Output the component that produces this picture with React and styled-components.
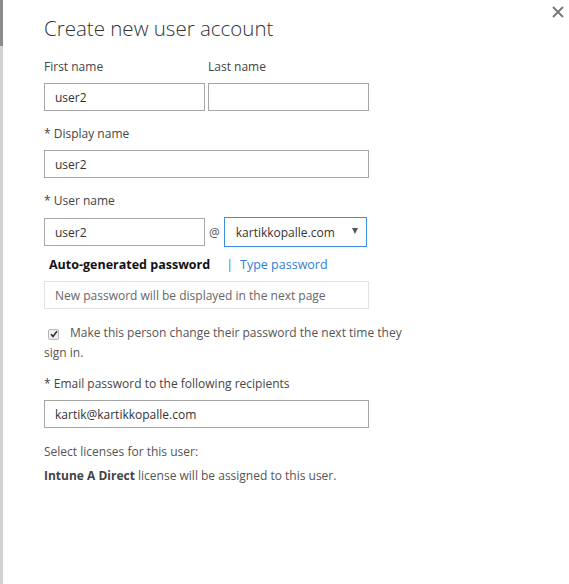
import { createGlobalStyle, styled } from 'styled-components';

const GlobalStyle = createGlobalStyle`
  html, body {
    margin: 0;
    padding: 0;
    background: #fff;
  }
  body {
    font-family: 'Open Sans', 'Liberation Sans', sans-serif;
    color: #444;
  }
`;

const Page = styled.div`
  display: flex;
  width: 569px;
  height: 584px;
  overflow: hidden;
`;

const Rail = styled.div`
  width: 3px;
  flex-shrink: 0;
  background: linear-gradient(#8c8c8c 0, #8c8c8c 46px, #d2d2d2 46px);
`;

const Panel = styled.div`
  position: relative;
  flex: 1;
  padding: 14px 0 0 41px;
`;

const Close = styled.button`
  position: absolute;
  top: 5px;
  right: 4px;
  width: 14px;
  height: 14px;
  padding: 0;
  border: none;
  background: none;
  color: #777;
  display: flex;
`;

const Title = styled.h1`
  margin: 0 0 16px;
  font-weight: 300;
  font-size: 20.5px;
  line-height: 28px;
  color: #333;
`;

const Row = styled.div`
  display: flex;
  align-items: ${(p) => p.$align || 'center'};
  gap: ${(p) => p.$gap ?? 3}px;
`;

const Field = styled.div`
  display: flex;
  flex-direction: column;
  gap: 7px;
  margin-bottom: ${(p) => p.$mb ?? 14}px;
`;

const Label = styled.label`
  font-size: 12px;
  line-height: 18px;
  color: #444;
`;

const Input = styled.div`
  box-sizing: border-box;
  width: ${(p) => p.$w}px;
  height: 28px;
  border: 1px solid ${(p) => (p.$muted ? '#e3e3e3' : '#a6a6a6')};
  padding: 0 10px;
  display: flex;
  align-items: center;
  font-size: 12px;
  color: ${(p) => (p.$muted ? '#666' : '#333')};
`;

const At = styled.span`
  font-size: 12px;
  color: #555;
  margin: 0 1px 0 1px;
`;

const Select = styled.div`
  box-sizing: border-box;
  width: 143px;
  height: 30px;
  border: 1px solid #3c8fe6;
  padding: 0 8px 0 11px;
  display: flex;
  align-items: center;
  justify-content: space-between;
  font-size: 12px;
  color: #333;
`;

const Caret = styled.span`
  width: 0;
  height: 0;
  border-left: 3px solid transparent;
  border-right: 3px solid transparent;
  border-top: 6px solid #555;
  margin-bottom: 2px;
`;

const Tabs = styled.div`
  display: flex;
  align-items: center;
  padding-left: 5px;
  margin: 9px 0 7px;
  font-size: 12.5px;
  line-height: 18px;
`;

const Tab = styled.span`
  font-weight: ${(p) => (p.$active ? 700 : 400)};
  color: ${(p) => (p.$active ? '#111' : '#2f7dd4')};
`;

const Bar = styled.span`
  color: #2f7dd4;
  margin: 0 7px 0 16px;
`;

const CheckRow = styled.div`
  width: 360px;
  margin: 14px 0 12px;
  font-size: 12px;
  line-height: 20px;
  color: #555;
`;

const Box = styled.span`
  display: inline-flex;
  align-items: center;
  justify-content: center;
  box-sizing: border-box;
  width: 11px;
  height: 11px;
  margin: 0 11px 0 4px;
  vertical-align: -1px;
  border: 1px solid #b8b8b8;
  background: #eee;
  border-radius: 2px;
  color: #333;
`;

const Note = styled.p`
  margin: 0 0 6px;
  font-size: 12px;
  line-height: 18px;
  color: #555;

  b {
    color: #444;
    font-weight: 700;
  }
`;

export default function App() {
  return (
    <Page>
      <GlobalStyle />
      <Rail />
      <Panel>
        <Close aria-label="Close">
          <svg width="14" height="14" viewBox="0 0 14 14">
            <path d="M2 2 L12 12 M12 2 L2 12" stroke="currentColor" strokeWidth="2" />
          </svg>
        </Close>
        <Title>Create new user account</Title>

        <Row $gap={3} $align="flex-start">
          <Field>
            <Label>First name</Label>
            <Input $w={161}>user2</Input>
          </Field>
          <Field>
            <Label>Last name</Label>
            <Input $w={161} />
          </Field>
        </Row>

        <Field>
          <Label>* Display name</Label>
          <Input $w={325}>user2</Input>
        </Field>

        <Field $mb={0}>
          <Label>* User name</Label>
          <Row $gap={3}>
            <Input $w={161}>user2</Input>
            <At>@</At>
            <Select>
              kartikkopalle.com
              <Caret />
            </Select>
          </Row>
        </Field>

        <Tabs>
          <Tab $active>Auto-generated password</Tab>
          <Bar>|</Bar>
          <Tab>Type password</Tab>
        </Tabs>

        <Input $w={325} $muted>New password will be displayed in the next page</Input>

        <CheckRow>
          <Box>
            <svg width="8" height="8" viewBox="0 0 8 8">
              <path d="M1 4.2 L3 6.4 L7 1.2" fill="none" stroke="currentColor" strokeWidth="1.6" />
            </svg>
          </Box>
          Make this person change their password the next time they sign in.
        </CheckRow>

        <Field $mb={15}>
          <Label>* Email password to the following recipients</Label>
          <Input $w={325}>kartik@kartikkopalle.com</Input>
        </Field>

        <Note>Select licenses for this user:</Note>
        <Note>
          <b>Intune A Direct</b> license will be assigned to this user.
        </Note>
      </Panel>
    </Page>
  );
}
